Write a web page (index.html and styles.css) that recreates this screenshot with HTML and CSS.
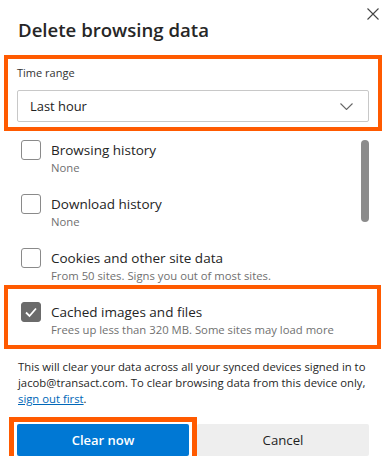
FILE: index.html
```html
<!DOCTYPE html>
<html lang="en">
<head>
    <meta charset="UTF-8">
    <meta name="viewport" content="width=device-width, initial-scale=1.0">
    <title>Delete browsing data</title>
    <link rel="stylesheet" href="styles.css">
</head>
<body>
    <div class="dialog">
        <div class="header">
            <h1 class="title">Delete browsing data</h1>
            <button class="close" aria-label="Close">
                <svg width="12" height="12" viewBox="0 0 12 12">
                    <path d="M0.5 0.5 L11.5 11.5 M11.5 0.5 L0.5 11.5" stroke="#444" stroke-width="1.1" fill="none"/>
                </svg>
            </button>
        </div>

        <!-- 时间范围 -->
        <div class="range mark">
            <div class="range-label">Time range</div>
            <div class="select">
                <span>Last hour</span>
                <svg width="13" height="7" viewBox="0 0 13 7">
                    <path d="M0.5 0.5 L6.5 6.5 L12.5 0.5" stroke="#666" stroke-width="1.1" fill="none"/>
                </svg>
            </div>
        </div>

        <!-- 数据类型列表 -->
        <div class="list">
            <div class="items">
                <div class="item">
                    <span class="checkbox"></span>
                    <div>
                        <div class="item-title">Browsing history</div>
                        <div class="item-sub">None</div>
                    </div>
                </div>
                <div class="item">
                    <span class="checkbox"></span>
                    <div>
                        <div class="item-title">Download history</div>
                        <div class="item-sub">None</div>
                    </div>
                </div>
                <div class="item">
                    <span class="checkbox"></span>
                    <div>
                        <div class="item-title">Cookies and other site data</div>
                        <div class="item-sub">From 50 sites. Signs you out of most sites.</div>
                    </div>
                </div>
            </div>
            <div class="scrollbar"><div class="thumb"></div></div>
        </div>

        <div class="item cached mark">
            <span class="checkbox checked">
                <svg width="20" height="20" viewBox="0 0 20 20">
                    <path d="M5 10.5 L8.5 14 L15 6.5" stroke="#fff" stroke-width="1.8" fill="none"/>
                </svg>
            </span>
            <div>
                <div class="item-title">Cached images and files</div>
                <div class="item-sub">Frees up less than 320 MB. Some sites may load more</div>
            </div>
        </div>

        <p class="note">
            This will clear your data across all your synced devices signed in to
            jacob@transact.com. To clear browsing data from this device only,
            <a href="#" class="link">sign out first</a>.
        </p>

        <div class="actions">
            <button class="btn primary">Clear now</button>
            <button class="btn">Cancel</button>
        </div>
    </div>
</body>
</html>
```

FILE: styles.css
```css
body {
    margin: 0;
    background: #fff;
    font-family: 'Open Sans', 'Noto Sans', sans-serif;
    color: #1b1b1b;
}

.dialog {
    width: 387px;
}

.header {
    display: flex;
    justify-content: space-between;
    align-items: flex-start;
    height: 55px;
    box-sizing: border-box;
    padding: 8px 8px 0 18px;
}

.title {
    margin: 9px 0 0;
    font-size: 18.6px;
    line-height: 26px;
    font-weight: 600;
    color: #262626;
}

.close {
    display: block;
    width: 12px;
    height: 12px;
    padding: 0;
    border: 0;
    background: none;
    cursor: pointer;
}

.close svg {
    display: block;
}

.mark {
    border: 4px solid #ff5a00;
}

.range {
    margin: 0 5px 0 4px;
    padding: 6px 9px 5px;
}

.range-label {
    font-size: 11px;
    line-height: 16px;
    color: #333;
}

.select {
    margin-top: 9px;
    height: 32px;
    box-sizing: border-box;
    border: 1px solid #c8c8c8;
    border-radius: 2px;
    display: flex;
    align-items: center;
    justify-content: space-between;
    padding: 0 15px 0 12px;
    font-size: 12.9px;
    color: #222;
}

.select svg {
    display: block;
}

.list {
    display: flex;
    padding: 9px 0 1px;
}

.items {
    flex: 1;
    display: flex;
    flex-direction: column;
    gap: 18px;
}

.item {
    display: flex;
    align-items: flex-start;
    gap: 10px;
    padding-left: 21px;
}

.checkbox {
    flex: none;
    width: 20px;
    height: 20px;
    box-sizing: border-box;
    border: 1px solid #8a8a8a;
    border-radius: 3px;
}

.checkbox.checked {
    background: #6b6b6b;
    border-color: #6b6b6b;
    position: relative;
}

.checkbox.checked svg {
    position: absolute;
    left: -1px;
    top: -1px;
}

.item-title {
    font-size: 13.5px;
    line-height: 20px;
    color: #242424;
}

.item-sub {
    font-size: 11.3px;
    line-height: 16px;
    color: #707070;
}

.scrollbar {
    width: 8px;
    margin-right: 18px;
}

.thumb {
    height: 82px;
    background: #8b8b8b;
    border-radius: 4px;
}

.cached {
    margin: 0 6px 0 4px;
    padding: 13px 0 7px 13px;
}

.note {
    margin: 10px 18px 0;
    font-size: 11.3px;
    line-height: 16px;
    color: #262626;
}

.link {
    color: #0067b8;
}

.actions {
    display: flex;
    gap: 8px;
    padding: 0 18px 0 17px;
    margin-top: 17px;
}

.btn {
    flex: 1;
    height: 32px;
    border: 0;
    border-radius: 2px;
    background: #eeeeee;
    font-family: inherit;
    font-size: 13.2px;
    color: #1f1f1f;
    cursor: pointer;
}

.btn.primary {
    position: relative;
    background: #0078d4;
    color: #fff;
    font-size: 13px;
    font-weight: 600;
}

/* 标注框 */
.btn.primary::after {
    content: '';
    position: absolute;
    left: -8px;
    right: -8px;
    top: -7px;
    bottom: -8px;
    border: 5px solid #ff5a00;
}
```
